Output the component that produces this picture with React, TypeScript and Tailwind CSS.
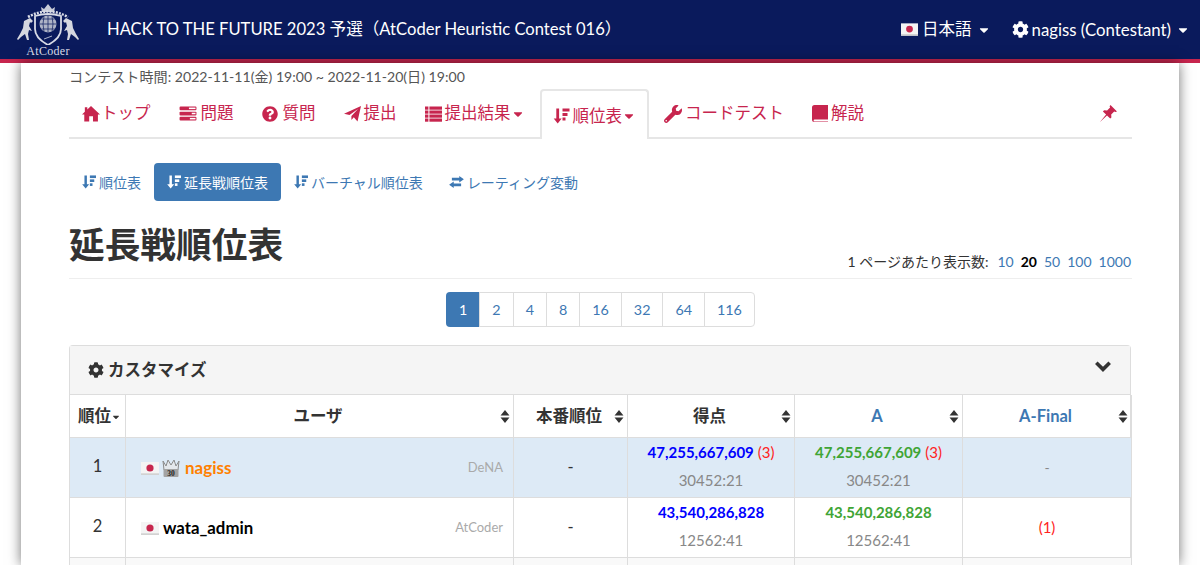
import { FaCaretDown, FaCog, FaQuestionCircle, FaWrench } from "react-icons/fa"

function SortAttr({ className }: { className?: string }) {
  return (
    <svg viewBox="0 0 16 16" className={className} fill="currentColor">
      <path d="M2.8 0.5h2.8v10h2.6L4.2 15.5 .2 10.5h2.6z" />
      <rect x="9" y="0.5" width="7" height="3" />
      <rect x="9" y="5" width="5" height="3" />
      <rect x="9" y="9.5" width="3" height="3" />
    </svg>
  )
}

function TasksIcon({ className }: { className?: string }) {
  return (
    <svg viewBox="0 0 18 16" className={className} fill="currentColor">
      <rect x="0" y="0.5" width="18" height="4" rx="1" />
      <rect x="0" y="6" width="18" height="4" rx="1" />
      <rect x="0" y="11.5" width="18" height="4" rx="1" />
      <rect x="10" y="1.7" width="7" height="1.6" fill="#fff" />
      <rect x="13" y="7.2" width="4" height="1.6" fill="#fff" />
      <rect x="11" y="12.7" width="6" height="1.6" fill="#fff" />
    </svg>
  )
}

function HomeIcon({ className }: { className?: string }) {
  return (
    <svg viewBox="0 0 19 17" className={className} fill="currentColor">
      <path d="M9.5 .5L19 9.5h-2.2V17h-5.2v-5.5H7.6V17H2.4V9.5H0l3-2.8V2h2.6v2.3z" />
    </svg>
  )
}

function SendIcon({ className }: { className?: string }) {
  return (
    <svg viewBox="0 0 17 16" className={className} fill="currentColor">
      <path d="M17 0L13.5 15.5 9.8 11.2 7.4 14V10L14 3 5.5 9 0 7.8z" />
    </svg>
  )
}

function ListIcon({ className }: { className?: string }) {
  return (
    <svg viewBox="0 0 17 16" className={className} fill="currentColor">
      <rect y="0.5" width="3.4" height="3.2" />
      <rect y="4.5" width="3.4" height="3.2" />
      <rect y="8.5" width="3.4" height="3.2" />
      <rect y="12.5" width="3.4" height="3.2" />
      <rect x="4.4" y="0.5" width="12.6" height="3.2" />
      <rect x="4.4" y="4.5" width="12.6" height="3.2" />
      <rect x="4.4" y="8.5" width="12.6" height="3.2" />
      <rect x="4.4" y="12.5" width="12.6" height="3.2" />
    </svg>
  )
}

function BookIcon({ className }: { className?: string }) {
  return (
    <svg viewBox="0 0 16 17" className={className} fill="currentColor">
      <path d="M2.5 0H16v14.5H2.6q-1 0-1 1t1 1H16v.5H2.5Q0 17 0 14.5V2.5Q0 0 2.5 0z" />
    </svg>
  )
}

function PinIcon({ className }: { className?: string }) {
  return (
    <svg viewBox="0 0 17 17" className={className} fill="currentColor">
      <path d="M10.5 0L17 6.5l-1.6 .4-1.2-.5-3 3 .2 3-1.2 1.2L7 10.4 0 17l6.1-7.4L2.9 6.4l1.2-1.2 3 .2 3-3-.5-1.2z" />
    </svg>
  )
}

function TransferIcon({ className }: { className?: string }) {
  return (
    <svg viewBox="0 0 16 13" className={className} fill="currentColor">
      <path d="M11 0l5 3.5L11 7V5H3V2h8zM5 6v2h8v3H5v2L0 9.5z" />
    </svg>
  )
}

function ChevronIcon({ className }: { className?: string }) {
  return (
    <svg viewBox="0 0 16 11" className={className} fill="none" stroke="currentColor" strokeWidth="3.6">
      <path d="M1.3 1.8L8 8.4l6.7-6.6" />
    </svg>
  )
}

function SortBoth() {
  return (
    <svg viewBox="0 0 10 14" className="w-[10px] h-[13px] justify-self-end" fill="#333">
      <path d="M5 0l4.8 5.8H.2zM5 14L.2 8.2h9.6z" />
    </svg>
  )
}

function Flag({ className }: { className?: string }) {
  return (
    <svg viewBox="0 0 18 13" className={className}>
      <rect width="18" height="13" fill="#f4f4f4" />
      <rect y="11.3" width="18" height="1.7" fill="#d2d2d2" />
      <circle cx="9" cy="6" r="3.6" fill="#c7274e" />
    </svg>
  )
}

function Crown() {
  return (
    <svg viewBox="0 0 20 20" className="w-[20px] h-[20px] shrink-0">
      <path d="M2 3l3 5 2-6 3 5 3-5 2 6 3-5-1 9H3z" fill="#e4e8ec" stroke="#8b8b8b" strokeWidth="1" />
      <rect x="2.5" y="11" width="15" height="8" rx="1" fill="#a3a3a3" />
      <text x="10" y="18" textAnchor="middle" fontSize="7.5" fontWeight="700" fill="#222" fontFamily="Liberation Serif, serif">30</text>
    </svg>
  )
}

function Logo() {
  return (
    <div className="flex flex-col items-center w-[62px] shrink-0">
      <svg viewBox="0 0 62 43" className="w-[62px] h-[43px]" fill="none" stroke="#d8dbe6">
        <path d="M25 10l-1-5 3 2 4-5 4 5 3-2-1 5z" fill="#c9ccd8" stroke="none" />
        <path d="M11 15q20-11 40 0" strokeWidth="2.6" strokeDasharray="2 1.2" />
        <path d="M18 14q13-4 26 0v13q0 9-13 16q-13-7-13-16z" strokeWidth="1.8" fill="#0a1a5c" />
        <circle cx="31" cy="22" r="8.5" fill="#aeb3c6" stroke="none" />
        <path d="M22.5 22h17M31 13.5v17M24.5 17h13M24.5 27h13M27 14.5q-2 7.5 0 15M35 14.5q2 7.5 0 15" stroke="#0a1a5c" strokeWidth=".7" />
        <path d="M27 37l8-3" strokeWidth=".8" />
        <path d="M13 16l3 3-2 2-1-1-1 4 3 5-3-1-1 4 1 6H10l-2-6-4 3-3 3-1-1 3-5 3-6 1-7z" fill="#d5d7df" stroke="none" />
        <path d="M49 16l-3 3 2 2 1-1 1 4-3 5 3-1 1 4-1 6h2l2-6 4 3 3 3 1-1-3-5-3-6-1-7z" fill="#d5d7df" stroke="none" />
      </svg>
      <span className="text-[#d8dbe6] text-[12px] leading-[12px] tracking-wide font-['Liberation_Serif',serif]">AtCoder</span>
    </div>
  )
}

function Tab({ icon, label, caret, active }: { icon: React.ReactNode; label: string; caret?: boolean; active?: boolean }) {
  return (
    <a className={active
      ? "flex items-center h-[50px] pt-[2px] px-[11px] mr-[2px] -mb-[2px] bg-white border-2 border-b-0 border-[#e6e6e6] rounded-t-[4px] text-[#c7254e]"
      : "flex items-center h-[49px] pt-[2px] px-[13px] mr-[2px] text-[#c7254e]"}>
      {icon}
      <span>{label}</span>
      {caret && <FaCaretDown className="w-[14px] h-[14px]" />}
    </a>
  )
}

function Pill({ icon, label, active }: { icon: React.ReactNode; label: string; active?: boolean }) {
  return (
    <a className={active
      ? "flex items-center gap-[3px] h-[38px] px-[13px] rounded-[4px] bg-[#3d78b3] text-white"
      : "flex items-center gap-[3px] h-[38px] px-[13px] text-[#3d78b3]"}>
      {icon}
      <span>{label}</span>
    </a>
  )
}

function HeadCell({ label, link }: { label: string; link?: boolean }) {
  return (
    <th className="border border-[#ddd] border-t-0 pl-0 pr-[3px] pt-[2px] font-bold">
      <div className="grid grid-cols-[1fr_auto_1fr] items-center">
        <span />
        <span className={link ? "text-[#3d78b3]" : "text-[#333]"}>{label}</span>
        <SortBoth />
      </div>
    </th>
  )
}

function ScoreCell({ score, color, wa, time }: { score: string; color: string; wa?: string; time: string }) {
  return (
    <td className="border border-[#ddd] text-center text-[15px] leading-[28px] pb-[3px]">
      <div>
        <span className={color + " font-bold"}>{score}</span>
        {wa && <span className="text-[#ff2222]"> {wa}</span>}
      </div>
      <div className="text-[#888]">{time}</div>
    </td>
  )
}

export default function App() {
  return (
    <div className="w-[1200px] h-[565px] overflow-hidden bg-white text-[#333] font-['Lato','Noto_Sans_CJK_JP',sans-serif] text-[16.5px]">
      <header className="flex items-center h-[63px] pl-[17px] pr-[10px] bg-[#0a1a5c] border-b-4 border-[#c7254e] text-white">
        <Logo />
        <span className="ml-[28px] text-[16.6px]">HACK TO THE FUTURE 2023 予選（AtCoder Heuristic Contest 016）</span>
        <div className="ml-auto flex items-center">
          <Flag className="w-[17px] h-[13px]" />
          <span className="ml-[4px]">日本語</span>
          <FaCaretDown className="ml-[5px] w-[14px] h-[14px]" />
          <FaCog className="ml-[21px] w-[17px] h-[17px]" />
          <span className="ml-[3px] text-[16.8px]">nagiss (Contestant)</span>
          <FaCaretDown className="ml-[5px] w-[14px] h-[14px]" />
        </div>
      </header>

      <main className="mx-[21px] pl-[48px] pr-[47px] h-[502px] bg-white shadow-[0_0_12px_rgba(0,0,0,0.55)]">
        <p className="h-[24px] flex items-end text-[14.1px] leading-[20px] text-[#555]">コンテスト時間: 2022-11-11(金) 19:00 ~ 2022-11-20(日) 19:00</p>

        <nav className="flex items-end h-[52px] border-b-2 border-[#e6e6e6]">
          <Tab icon={<HomeIcon className="w-[18px] h-[17px] mr-[1px]" />} label="トップ" />
          <Tab icon={<TasksIcon className="w-[18px] h-[15px] mr-[4px]" />} label="問題" />
          <Tab icon={<FaQuestionCircle className="w-[16px] h-[16px] mr-[5px]" />} label="質問" />
          <Tab icon={<SendIcon className="w-[17px] h-[16px] mr-[3px]" />} label="提出" />
          <Tab icon={<ListIcon className="w-[17px] h-[16px] mr-[3px]" />} label="提出結果" caret />
          <Tab icon={<SortAttr className="w-[17px] h-[16px] mr-[3px]" />} label="順位表" caret active />
          <Tab icon={<FaWrench className="w-[18px] h-[18px] mr-[3px]" />} label="コードテスト" />
          <Tab icon={<BookIcon className="w-[16px] h-[17px] mr-[3px]" />} label="解説" />
          <PinIcon className="ml-auto mr-[15px] mb-[15px] w-[17px] h-[17px] text-[#c7254e]" />
        </nav>

        <div className="flex mt-[24px] text-[14px]">
          <Pill icon={<SortAttr className="w-[14px] h-[14px]" />} label="順位表" />
          <Pill icon={<SortAttr className="w-[14px] h-[14px]" />} label="延長戦順位表" active />
          <Pill icon={<SortAttr className="w-[14px] h-[14px]" />} label="バーチャル順位表" />
          <Pill icon={<TransferIcon className="w-[15px] h-[12px]" />} label="レーティング変動" />
        </div>

        <div className="flex items-end justify-between h-[78px] border-b border-[#eee]">
          <h1 className="mb-[11px] text-[35.7px] leading-[44px] font-bold">延長戦順位表</h1>
          <div className="mb-[6px] text-[14px] leading-[20px]">
            <span>1 ページあたり表示数:</span>
            <span className="ml-[9px] text-[#3d78b3]">10</span>
            <span className="ml-[7px] font-bold text-black">20</span>
            <span className="ml-[7px] text-[#3d78b3]">50</span>
            <span className="ml-[7px] text-[#3d78b3]">100</span>
            <span className="ml-[7px] mr-px text-[#3d78b3]">1000</span>
          </div>
        </div>

        <div className="flex justify-center mt-[13px] text-[14.3px]">
          {["1", "2", "4", "8", "16", "32", "64", "116"].map((p, i) => (
            <a key={p} className={i === 0
              ? "flex items-center h-[35px] px-[13px] bg-[#3d78b3] text-white rounded-l-[4px]"
              : "flex items-center h-[35px] px-[12px] -ml-px bg-white border border-[#ddd] text-[#3d78b3] last:rounded-r-[4px]"}>{p}</a>
          ))}
        </div>

        <section className="mt-[18px] mr-px border border-b-0 border-[#ddd] rounded-t-[4px]">
          <div className="flex items-center justify-between h-[49px] px-[18px] bg-[#f5f5f5] border-b border-[#ddd]">
            <span className="flex items-center gap-[4px] font-bold">
              <FaCog className="w-[16px] h-[16px]" />カスタマイズ
            </span>
            <ChevronIcon className="w-[16px] h-[11px] mr-[1px] mb-[7px]" />
          </div>
          <table className="w-[1062px] table-fixed border-collapse -mx-px">
            <colgroup>
              <col className="w-[56px]" />
              <col className="w-[388px]" />
              <col className="w-[114px]" />
              <col className="w-[167px]" />
              <col className="w-[168px]" />
              <col className="w-[169px]" />
            </colgroup>
            <thead>
              <tr className="h-[42px]">
                <th className="border border-[#ddd] border-t-0 pt-[2px] font-bold">
                  <span className="inline-flex items-center pl-[4px]">順位<FaCaretDown className="w-[10px] h-[10px]" /></span>
                </th>
                <HeadCell label="ユーザ" />
                <HeadCell label="本番順位" />
                <HeadCell label="得点" />
                <HeadCell label="A" link />
                <HeadCell label="A-Final" link />
              </tr>
            </thead>
            <tbody>
              <tr className="h-[60px] bg-[#ddeaf6]">
                <td className="border border-[#ddd] text-center pb-[2px]">1</td>
                <td className="border border-[#ddd] pl-[15px] pr-[10px] pt-[2px]">
                  <div className="flex items-center">
                    <Flag className="w-[18px] h-[13px] shrink-0" />
                    <span className="ml-[2px]"><Crown /></span>
                    <span className="ml-[4px] text-[17px] font-bold text-[#ff8000]">nagiss</span>
                    <span className="ml-auto text-[13px] text-[#aaa]">DeNA</span>
                  </div>
                </td>
                <td className="border border-[#ddd] text-center">-</td>
                <ScoreCell score="47,255,667,609" color="text-[#0000ff]" wa="(3)" time="30452:21" />
                <ScoreCell score="47,255,667,609" color="text-[#3fa535]" wa="(3)" time="30452:21" />
                <td className="border border-[#ddd] text-center text-[#888] text-[14px]">-</td>
              </tr>
              <tr className="h-[59px]">
                <td className="border border-[#ddd] text-center pb-[2px]">2</td>
                <td className="border border-[#ddd] pl-[15px] pr-[10px] pt-[2px]">
                  <div className="flex items-center">
                    <Flag className="w-[18px] h-[13px] shrink-0" />
                    <span className="ml-[4px] text-[16.8px] font-bold text-black">wata_admin</span>
                    <span className="ml-auto text-[13px] text-[#aaa]">AtCoder</span>
                  </div>
                </td>
                <td className="border border-[#ddd] text-center">-</td>
                <ScoreCell score="43,540,286,828" color="text-[#0000ff]" time="12562:41" />
                <ScoreCell score="43,540,286,828" color="text-[#3fa535]" time="12562:41" />
                <td className="border border-[#ddd] text-center text-[#ff2222] text-[15px]">(1)</td>
              </tr>
              <tr className="h-[60px] bg-[#f9f9f9]">
                <td className="border border-[#ddd]" />
                <td className="border border-[#ddd]" />
                <td className="border border-[#ddd]" />
                <td className="border border-[#ddd]" />
                <td className="border border-[#ddd]" />
                <td className="border border-[#ddd]" />
              </tr>
            </tbody>
          </table>
        </section>
      </main>
    </div>
  )
}
